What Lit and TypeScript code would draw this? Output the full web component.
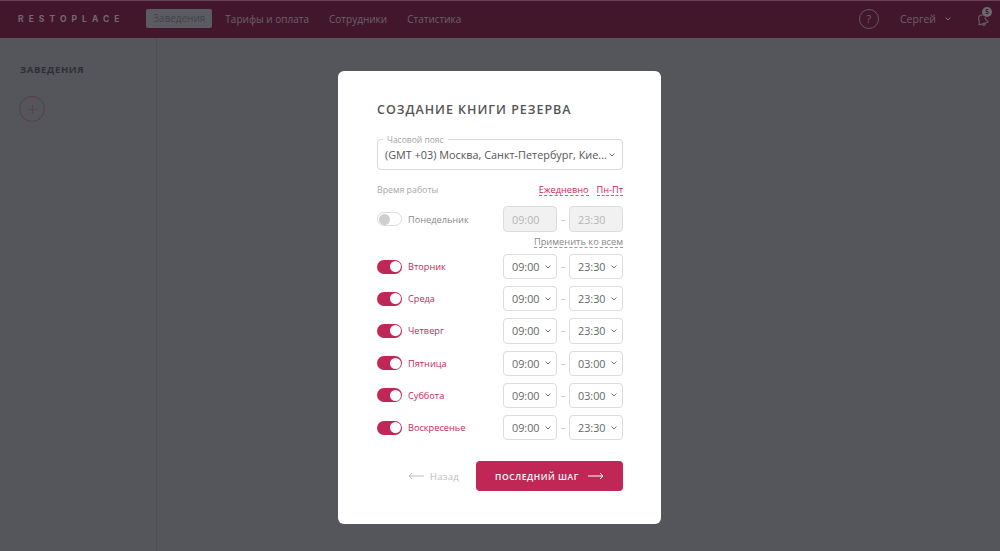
import { LitElement, html, css, svg } from 'lit';
import { customElement } from 'lit/decorators.js';

const chevron = html`<svg class="chev" width="6" height="4" viewBox="0 0 6 4"><path d="M.5.5 3 3 5.500.5" fill="none" stroke="currentColor" stroke-width="1"/></svg>`;

const days = [
  { name: 'Вторник', from: '09:00', to: '23:30' },
  { name: 'Среда', from: '09:00', to: '23:30' },
  { name: 'Четверг', from: '09:00', to: '23:30' },
  { name: 'Пятница', from: '09:00', to: '03:00' },
  { name: 'Суббота', from: '09:00', to: '03:00' },
  { name: 'Воскресенье', from: '09:00', to: '23:30' },
];

const arrowLeft = svg`<path d="M16 4H1M4 1 1 4l3 3" fill="none" stroke="currentColor" stroke-width="1"/>`;
const arrowRight = svg`<path d="M0 4h15M12 1l3 3-3 3" fill="none" stroke="currentColor" stroke-width="1"/>`;

@customElement('app-root')
export class AppRoot extends LitElement {
  static styles = css`
    :host {
      display: block;
      width: 1000px;
      height: 551px;
      overflow: hidden;
      position: relative;
      background: #54565b;
      font-family: 'Open Sans', sans-serif;
      color: #555;
    }
    .header {
      height: 38px;
      box-sizing: border-box;
      background: #43172b;
      border-top: 1px solid #6b4257;
      display: flex;
      align-items: center;
      padding: 0 0 2px 18px;
    }
    .logo {
      font-family: 'Inter', sans-serif;
      font-size: 8.5px;
      font-weight: 700;
      letter-spacing: 5.05px;
      color: #6f6a72;
      width: 128px;
    }
    .nav {
      display: flex;
      align-items: center;
      gap: 20px;
      font-size: 10px;
      color: #67626b;
    }
    .nav .active {
      background: #5b5c62;
      color: #43434a;
      border-radius: 2px;
      height: 19px;
      line-height: 19px;
      padding: 0 7px;
      margin-right: -7px;
    }
    .right {
      margin-left: auto;
      display: flex;
      align-items: center;
      color: #67626b;
    }
    .help {
      width: 20px;
      height: 20px;
      box-sizing: border-box;
      border: 1px solid #5f5a63;
      border-radius: 50%;
      display: flex;
      align-items: center;
      justify-content: center;
      font-size: 11px;
      margin-right: 21px;
    }
    .user {
      font-size: 10.5px;
      margin-right: 9px;
    }
    .bell {
      position: relative;
      margin: 0 10px 0 23px;
      width: 16px;
      height: 18px;
    }
    .bell svg {
      transform: rotate(-20deg);
    }
    .badge {
      position: absolute;
      right: -2px;
      top: -3px;
      width: 10px;
      height: 10px;
      border-radius: 50%;
      background: #6b6a70;
      color: #43172b;
      font-size: 6.5px;
      font-weight: 700;
      line-height: 10px;
      text-align: center;
    }
    .body {
      display: flex;
      height: 513px;
    }
    .side {
      width: 157px;
      box-sizing: border-box;
      border-right: 1px solid #4d4f54;
      padding: 25px 0 0 20px;
    }
    .side h2 {
      margin: 0;
      font-size: 9.5px;
      line-height: 13px;
      font-weight: 700;
      letter-spacing: 0.65px;
      color: #2e2f36;
    }
    .add {
      width: 26px;
      height: 26px;
      box-sizing: border-box;
      margin: 20px 0 0 -1px;
      border: 1px solid #5a3c4c;
      border-radius: 50%;
      display: flex;
      align-items: center;
      justify-content: center;
    }
    .modal {
      position: absolute;
      left: 338px;
      top: 71px;
      width: 323px;
      height: 453px;
      box-sizing: border-box;
      background: #fff;
      border-radius: 6px;
      padding: 30px 38px 0 39px;
    }
    h1 {
      margin: 0;
      font-size: 12.5px;
      line-height: 17px;
      font-weight: 600;
      letter-spacing: 0.98px;
      color: #555;
    }
    .select {
      position: relative;
      margin-top: 21px;
      height: 31px;
      box-sizing: border-box;
      border: 1px solid #d9d9d9;
      border-radius: 4px;
      display: flex;
      align-items: center;
      justify-content: space-between;
      padding: 0 7px;
      font-size: 10.85px;
      color: #555;
    }
    .select label {
      position: absolute;
      left: 5px;
      top: -6px;
      padding: 0 4px;
      background: #fff;
      font-size: 8.5px;
      line-height: 11px;
      color: #a5a5a5;
    }
    .chev {
      color: #777;
      flex: none;
    }
    .hours {
      display: flex;
      justify-content: space-between;
      align-items: center;
      margin-top: 13px;
      height: 13px;
      font-size: 8.8px;
      color: #a8a8a8;
    }
    .links {
      display: flex;
      gap: 8px;
      font-size: 9.2px;
      color: #c5285a;
    }
    .links span {
      border-bottom: 1px dashed #d8557f;
      line-height: 11px;
    }
    .rows {
      display: flex;
      flex-direction: column;
      gap: 7px;
    }
    .monday {
      margin-top: 10px;
    }
    .row {
      display: flex;
      align-items: center;
      height: 25.2px;
      font-size: 9.2px;
      color: #c5285a;
    }
    .monday .row {
      height: 26px;
      color: #8a8a8a;
    }
    .switch {
      width: 25px;
      height: 14px;
      box-sizing: border-box;
      border-radius: 7px;
      background: #c12756;
      display: flex;
      align-items: center;
      justify-content: flex-end;
      padding: 0 1.5px;
      margin-right: 6px;
      flex: none;
    }
    .switch i {
      width: 11px;
      height: 11px;
      border-radius: 50%;
      background: #fff;
    }
    .switch.off {
      background: #fff;
      border: 1px solid #dcdcdc;
      justify-content: flex-start;
      padding: 0 0.5px;
    }
    .switch.off i {
      background: #cfcfcf;
    }
    .day {
      flex: 1;
    }
    .time {
      width: 54px;
      height: 100%;
      box-sizing: border-box;
      border: 1px solid #dcdcdc;
      border-radius: 4px;
      display: flex;
      align-items: center;
      justify-content: space-between;
      padding: 0 5px 0 8px;
      font-size: 10.8px;
      color: #666;
    }
    .time.off {
      background: #f1f1f1;
      color: #b5b5b5;
    }
    .dash {
      width: 12px;
      text-align: center;
      color: #bbb;
      font-size: 9px;
    }
    .apply-wrap {
      display: flex;
      justify-content: flex-end;
      margin: 4px 0 6px;
    }
    .apply {
      font-size: 9.3px;
      line-height: 11px;
      color: #888;
      border-bottom: 1px dashed #999;
    }
    .footer {
      display: flex;
      align-items: center;
      justify-content: flex-end;
      margin-top: 21px;
    }
    .back {
      display: flex;
      align-items: center;
      gap: 6px;
      font-size: 9.5px;
      letter-spacing: 0.3px;
      color: #bdbdbd;
      margin-right: 17px;
    }
    .next {
      width: 147px;
      height: 30px;
      border-radius: 4px;
      background: #c12756;
      color: #fff;
      display: flex;
      align-items: center;
      justify-content: center;
      gap: 9px;
      font-size: 8.5px;
      font-weight: 600;
      letter-spacing: 0.55px;
    }
  `;

  render() {
    return html`
      <div class="header">
        <div class="logo">RESTOPLACE</div>
        <div class="nav">
          <span class="active">Заведения</span>
          <span>Тарифы и оплата</span>
          <span>Сотрудники</span>
          <span>Статистика</span>
        </div>
        <div class="right">
          <div class="help">?</div>
          <span class="user">Сергей</span>
          ${chevron}
          <div class="bell">
            <svg width="16" height="18" viewBox="0 0 16 18"><path d="M3 13.500c1.300-1.400 1.600-2.800 1.800-5C5 6.300 6.200 5 8 5c.8 0 1.500.3 2 .8M3 13.500l10 .5M11 8.500c.2 2 .9 3.900 2 5.500M6.500 14.200c.3 1 1 1.500 1.700 1.500s1.300-.5 1.600-1.400" fill="none" stroke="currentColor" stroke-width="1.100"/></svg>
            <span class="badge">5</span>
          </div>
        </div>
      </div>
      <div class="body">
        <div class="side">
          <h2>ЗАВЕДЕНИЯ</h2>
          <div class="add">
            <svg width="9" height="9" viewBox="0 0 9 9"><path d="M4.500 0v9M0 4.500h9" stroke="#5a4250" stroke-width="1"/></svg>
          </div>
        </div>
      </div>
      <div class="modal">
        <h1>СОЗДАНИЕ КНИГИ РЕЗЕРВА</h1>
        <div class="select">
          <label>Часовой пояс</label>
          <span>(GMT +03) Москва, Санкт-Петербург, Кие...</span>
          ${chevron}
        </div>
        <div class="hours">
          <span>Время работы</span>
          <div class="links"><span>Ежедневно</span><span>Пн-Пт</span></div>
        </div>
        <div class="monday">
          <div class="row">
            <div class="switch off"><i></i></div>
            <span class="day">Понедельник</span>
            <div class="time off">09:00</div>
            <span class="dash">–</span>
            <div class="time off">23:30</div>
          </div>
        </div>
        <div class="apply-wrap"><span class="apply">Применить ко всем</span></div>
        <div class="rows">
          ${days.map(
            (d) => html`
              <div class="row">
                <div class="switch"><i></i></div>
                <span class="day">${d.name}</span>
                <div class="time">${d.from}${chevron}</div>
                <span class="dash">–</span>
                <div class="time">${d.to}${chevron}</div>
              </div>
            `
          )}
        </div>
        <div class="footer">
          <div class="back">
            <svg width="16" height="8" viewBox="0 0 16 8">${arrowLeft}</svg>
            Назад
          </div>
          <div class="next">
            ПОСЛЕДНИЙ ШАГ
            <svg width="16" height="8" viewBox="0 0 16 8">${arrowRight}</svg>
          </div>
        </div>
      </div>
    `;
  }
}
